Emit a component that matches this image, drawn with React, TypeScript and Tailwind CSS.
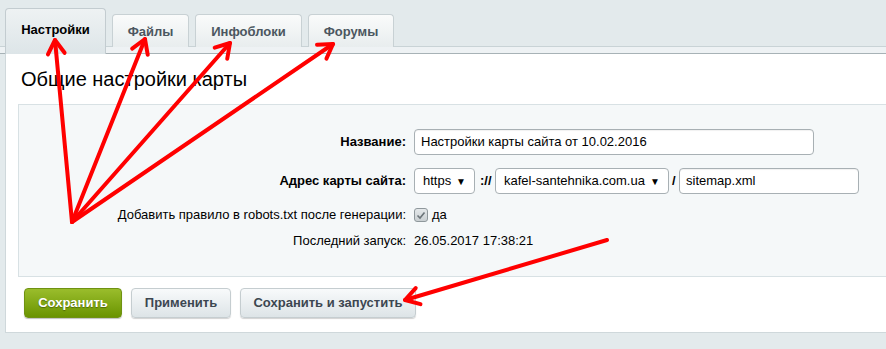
import React from 'react';

type Pt = [number, number];

const arrows: { from: Pt; to: Pt }[] = [
  { from: [72, 222], to: [55, 40] },
  { from: [72, 222], to: [145, 39] },
  { from: [72, 222], to: [230, 43] },
  { from: [72, 222], to: [333, 44] },
  { from: [607, 240], to: [405, 300] },
];

const head = (from: Pt, to: Pt) => {
  const a = Math.atan2(from[1] - to[1], from[0] - to[0]);
  const len = 16;
  const spread = 0.55;
  const p1: Pt = [to[0] + len * Math.cos(a + spread), to[1] + len * Math.sin(a + spread)];
  const p2: Pt = [to[0] + len * Math.cos(a - spread), to[1] + len * Math.sin(a - spread)];
  return `M${p1[0]},${p1[1]} L${to[0]},${to[1]} L${p2[0]},${p2[1]}`;
};

const Tab: React.FC<{ label: string; width: string; active?: boolean }> = ({ label, width, active }) =>
  active ? (
    <div
      className={`${width} h-[46px] rounded-t-[4px] border border-b-0 border-[#c3ccd0] bg-[linear-gradient(to_bottom,#eef2f3,#dde5e8)] flex justify-center pt-[11px] text-[13px] font-bold text-black`}
    >
      {label}
    </div>
  ) : (
    <div
      className={`${width} h-[33px] mb-[7px] rounded-t-[4px] border border-b-0 border-[#c8d1d4] bg-[linear-gradient(to_bottom,#fafbfb,#e8edee)] flex justify-center pt-[7px] text-[13px] font-bold text-[#4b5660]`}
    >
      {label}
    </div>
  );

const Select: React.FC<{ value: string; width: string }> = ({ value, width }) => (
  <div
    className={`${width} h-[26px] rounded-[4px] border border-[#a8b0b4] bg-white flex items-center justify-between pl-[8px] pr-[8px] text-[13px] text-black`}
  >
    <span>{value}</span>
    <span className="text-[10px]">▼</span>
  </div>
);

const Field: React.FC<{ value: string; width: string }> = ({ value, width }) => (
  <div
    className={`${width} h-[26px] rounded-[4px] border border-[#a8b0b4] bg-white flex items-center pl-[6px] text-[13px] text-black shadow-[inset_0_1px_1px_rgba(0,0,0,0.06)]`}
  >
    {value}
  </div>
);

const Row: React.FC<{ label: string; bold?: boolean; className?: string; children: React.ReactNode }> = ({
  label,
  bold,
  className,
  children,
}) => (
  <div className={`flex items-center ${className ?? ''}`}>
    <div className={`w-[387px] text-right text-[13px] text-black ${bold ? 'font-bold' : ''}`}>{label}</div>
    <div className="ml-[8px] flex items-center">{children}</div>
  </div>
);

export default function App() {
  return (
    <div className="relative w-[886px] h-[349px] overflow-hidden bg-[#e3eaec] pt-[8px] font-['Liberation_Sans',Arial,sans-serif]">
      <div className="flex items-end gap-[6px] h-[46px] pl-[5px] bg-[linear-gradient(to_bottom,transparent_38px,#c9d3d6_38px,#c9d3d6_39px,#eef2f4_39px,#eef2f4_45px,#a7b2b6_45px)]">
        <Tab label="Настройки" width="w-[101px]" active />
        <Tab label="Файлы" width="w-[77px]" />
        <Tab label="Инфоблоки" width="w-[107px]" />
        <Tab label="Форумы" width="w-[86px]" />
      </div>

      <div className="ml-[5px] h-[279px] bg-white border-l border-b border-[#cfd8db] pt-[13px]">
        <div className="pl-[15px] text-[20px] leading-[24px] text-black">Общие настройки карты</div>

        <div className="ml-[12px] mt-[13px] h-[173px] bg-[#f5f8f9] border border-r-0 border-[#d8e1e4] pt-[24px]">
          <Row label="Название:" bold>
            <Field value="Настройки карты сайта от 10.02.2016" width="w-[400px]" />
          </Row>
          <Row label="Адрес карты сайта:" bold className="mt-[13px]">
            <Select value="https" width="w-[61px]" />
            <span className="ml-[5px] w-[15px] text-[13px] font-bold text-black">://</span>
            <Select value="kafel-santehnika.com.ua" width="w-[174px]" />
            <span className="ml-[3px] w-[7px] text-[13px] font-bold text-black">/</span>
            <Field value="sitemap.xml" width="w-[180px]" />
          </Row>
          <Row label="Добавить правило в robots.txt после генерации:" className="mt-[11px] h-[20px]">
            <span className="w-[14px] h-[14px] rounded-[3px] border border-[#8f989c] bg-[linear-gradient(to_bottom,#e4e8ea,#c9cfd2)] flex items-center justify-center">
              <svg width="10" height="9" viewBox="0 0 10 9">
                <path d="M1.5 4.5 L4 7 L8.5 1.5" fill="none" stroke="#6b7479" strokeWidth="1.6" />
              </svg>
            </span>
            <span className="ml-[4px] text-[13px] text-black">да</span>
          </Row>
          <Row label="Последний запуск:" className="mt-[6px] h-[20px]">
            <span className="text-[13px] text-black">26.05.2017 17:38:21</span>
          </Row>
        </div>

        <div className="flex gap-[9px] ml-[18px] mt-[11px]">
          <button className="w-[98px] h-[30px] rounded-[4px] border border-[#6f9212] bg-[linear-gradient(to_bottom,#9abd2c,#6a9400)] text-white text-[13px] font-bold [text-shadow:0_1px_1px_rgba(0,0,0,0.35)] shadow-[0_1px_1px_rgba(0,0,0,0.25)]">
            Сохранить
          </button>
          <button className="w-[100px] h-[30px] rounded-[4px] border border-[#c5cdd0] bg-[linear-gradient(to_bottom,#f8fafb,#dde4e7)] text-[#3c4650] text-[13px] font-bold shadow-[0_1px_1px_rgba(0,0,0,0.18)]">
            Применить
          </button>
          <button className="w-[176px] h-[30px] rounded-[4px] border border-[#c5cdd0] bg-[linear-gradient(to_bottom,#f8fafb,#dde4e7)] text-[#3c4650] text-[13px] font-bold shadow-[0_1px_1px_rgba(0,0,0,0.18)]">
            Сохранить и запустить
          </button>
        </div>
      </div>

      <svg className="absolute inset-0 pointer-events-none" width="886" height="349">
        {arrows.map((ar, i) => (
          <g key={i} stroke="#ff0000" strokeWidth="4" fill="none" strokeLinecap="round" strokeLinejoin="round">
            <line x1={ar.from[0]} y1={ar.from[1]} x2={ar.to[0]} y2={ar.to[1]} />
            <path d={head(ar.from, ar.to)} />
          </g>
        ))}
      </svg>
    </div>
  );
}
